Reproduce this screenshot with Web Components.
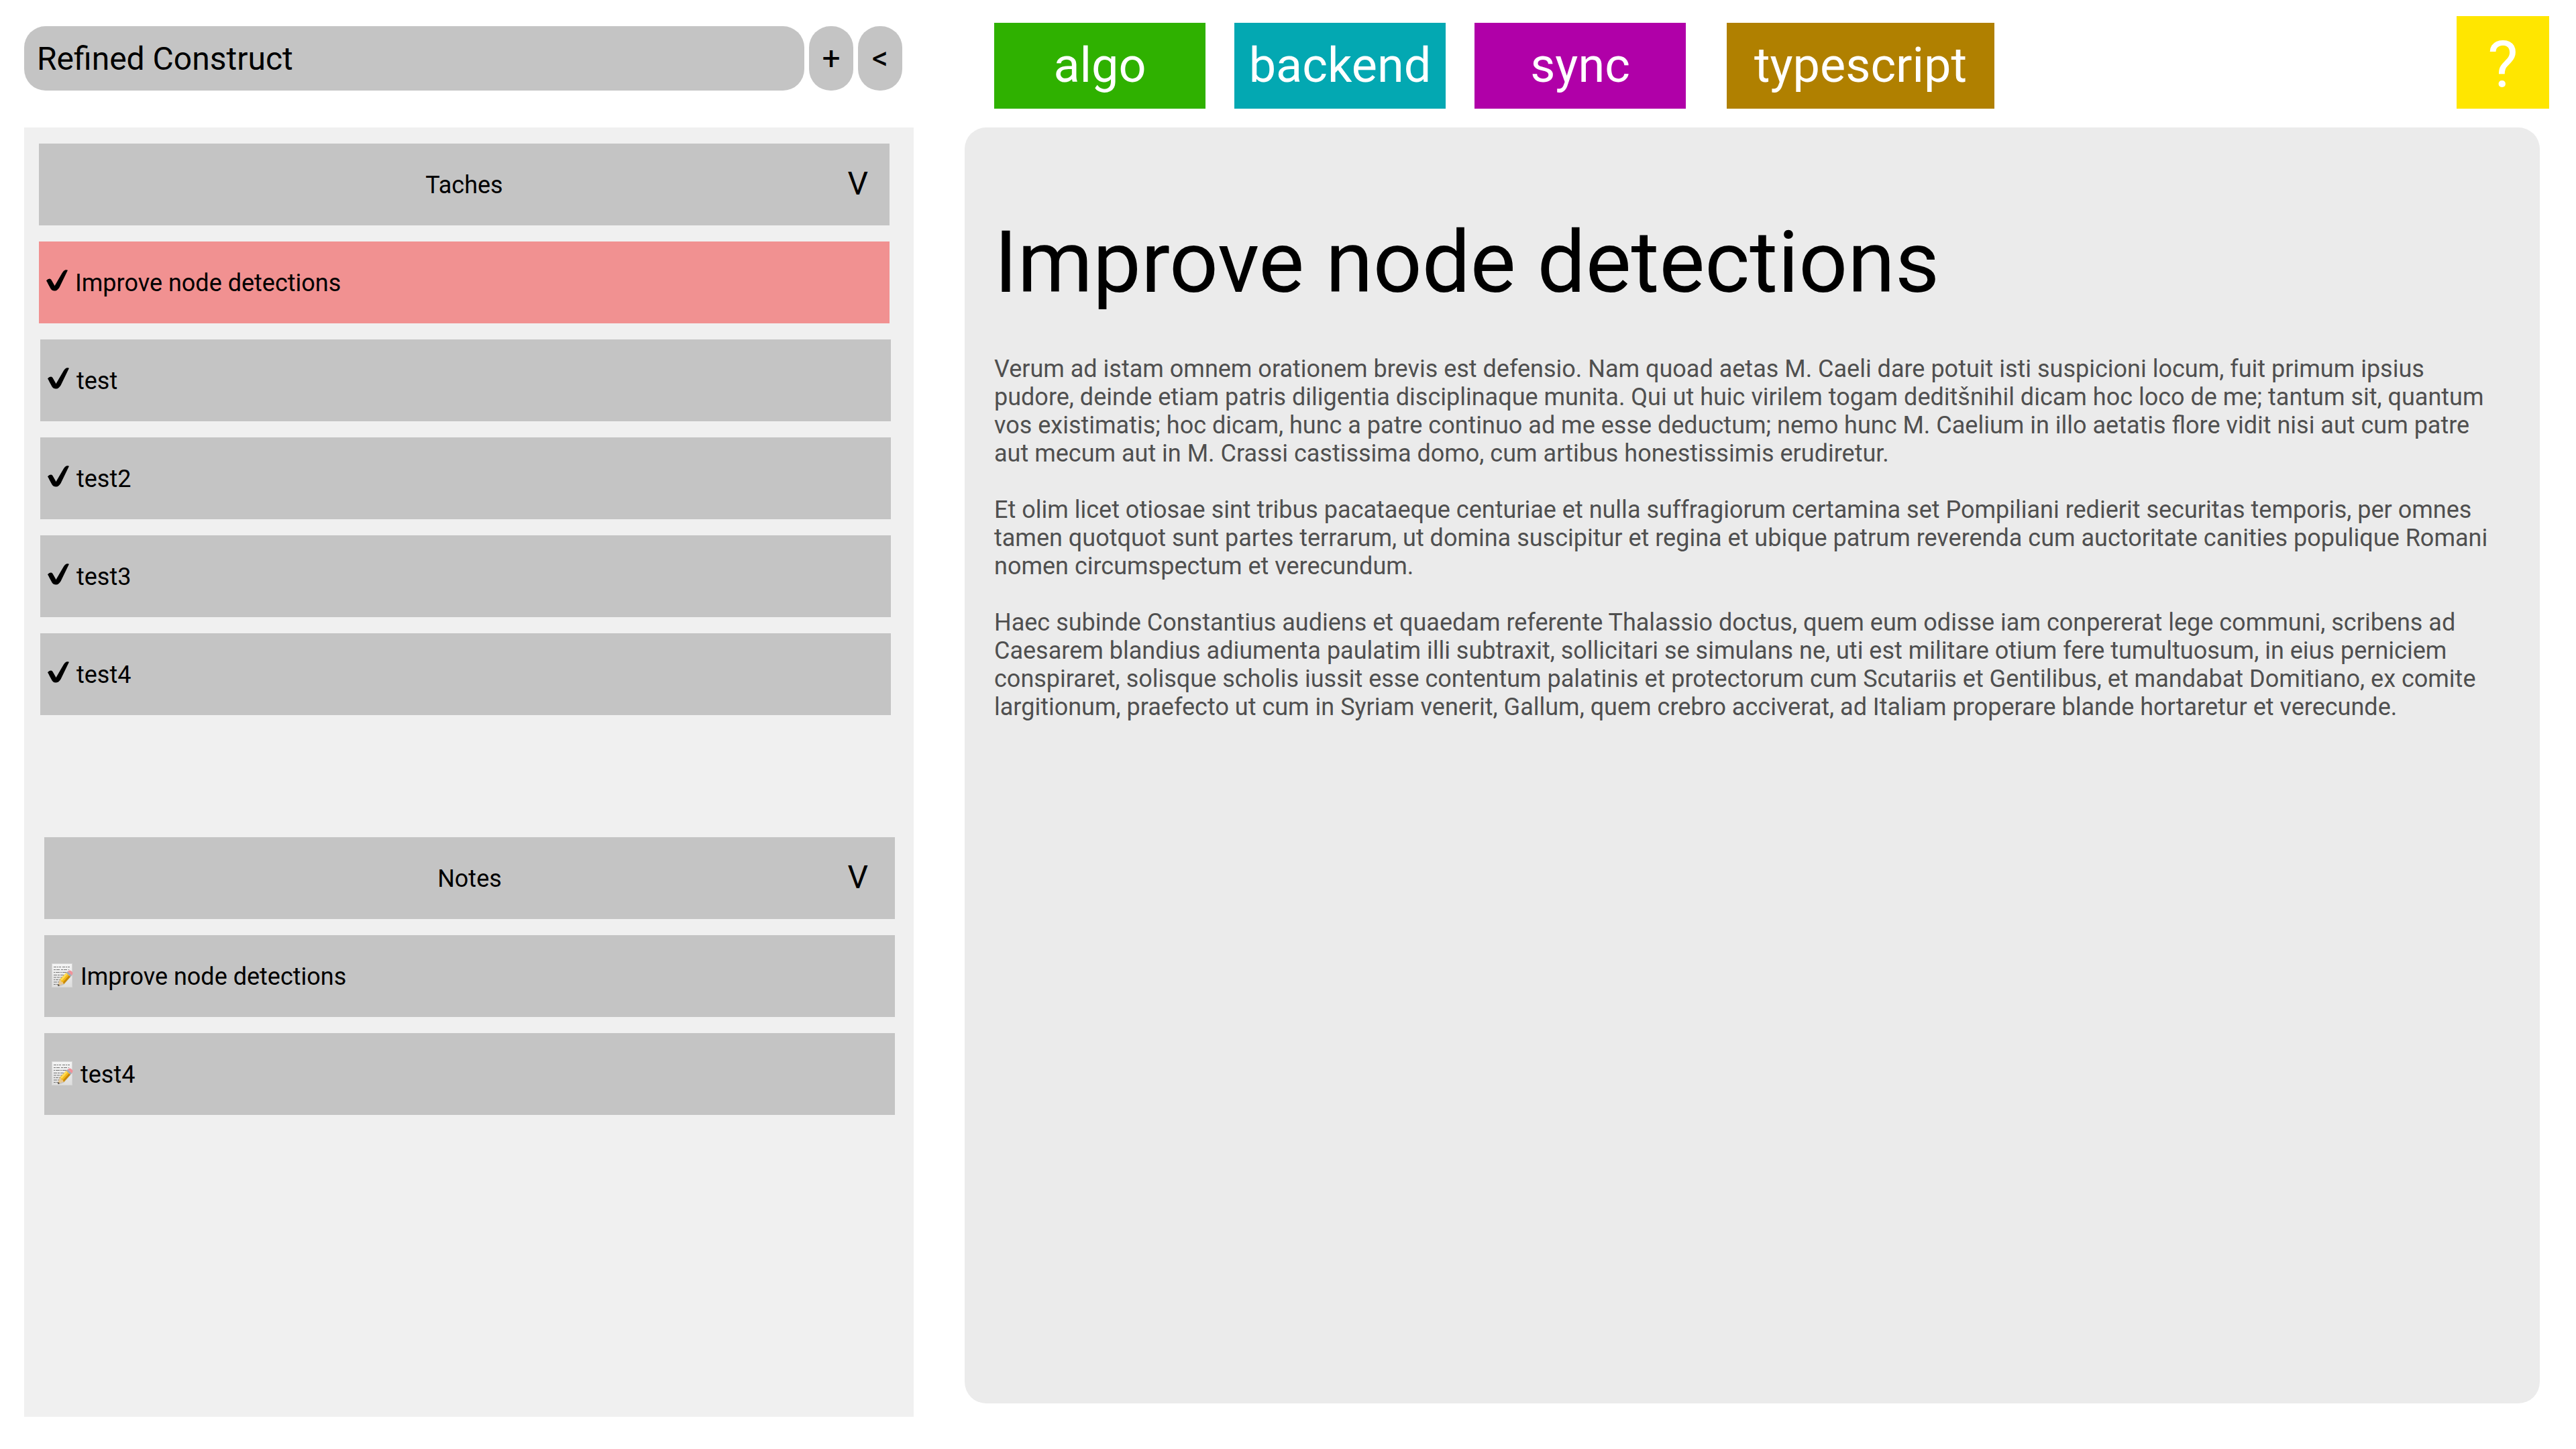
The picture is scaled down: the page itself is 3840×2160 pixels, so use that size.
<!DOCTYPE html>
<html lang="fr">
<head>
<meta charset="utf-8">
<meta name="viewport" content="width=device-width, initial-scale=1">
<title>Refined Construct</title>
<style>
  body { margin: 0; background: #fff; color: #000; font-family: Roboto, "Liberation Sans", sans-serif; font-size: 36px; line-height: 42px; }
</style>
</head>
<body>
<app-shell>
  <project-bar slot="project" name="Refined Construct"></project-bar>
  <nav-group slot="nav" label="Taches">
    <nav-item icon="check" current>Improve node detections</nav-item>
    <nav-item icon="check">test</nav-item>
    <nav-item icon="check">test2</nav-item>
    <nav-item icon="check">test3</nav-item>
    <nav-item icon="check">test4</nav-item>
  </nav-group>
  <nav-group slot="nav" label="Notes" inset>
    <nav-item icon="memo">Improve node detections</nav-item>
    <nav-item icon="memo">test4</nav-item>
  </nav-group>
  <tag-chip slot="tags" style="--tag: #2fb100">algo</tag-chip>
  <tag-chip slot="tags" style="--tag: #03a8b2">backend</tag-chip>
  <tag-chip slot="tags" style="--tag: #b000a8">sync</tag-chip>
  <tag-chip slot="tags" wide style="--tag: #b08000">typescript</tag-chip>
  <help-button slot="help"></help-button>
  <doc-panel slot="doc" heading="Improve node detections">
    <p>Verum ad istam omnem orationem brevis est defensio. Nam quoad aetas M. Caeli dare potuit isti suspicioni locum, fuit primum ipsius pudore, deinde etiam patris diligentia disciplinaque munita. Qui ut huic virilem togam deditšnihil dicam hoc loco de me; tantum sit, quantum vos existimatis; hoc dicam, hunc a patre continuo ad me esse deductum; nemo hunc M. Caelium in illo aetatis flore vidit nisi aut cum patre aut mecum aut in M. Crassi castissima domo, cum artibus honestissimis erudiretur.</p>
    <p>Et olim licet otiosae sint tribus pacataeque centuriae et nulla suffragiorum certamina set Pompiliani redierit securitas temporis, per omnes tamen quotquot sunt partes terrarum, ut domina suscipitur et regina et ubique patrum reverenda cum auctoritate canities populique Romani nomen circumspectum et verecundum.</p>
    <p>Haec subinde Constantius audiens et quaedam referente Thalassio doctus, quem eum odisse iam conpererat lege communi, scribens ad Caesarem blandius adiumenta paulatim illi subtraxit, sollicitari se simulans ne, uti est militare otium fere tumultuosum, in eius perniciem conspiraret, solisque scholis iussit esse contentum palatinis et protectorum cum Scutariis et Gentilibus, et mandabat Domitiano, ex comite largitionum, praefecto ut cum in Syriam venerit, Gallum, quem crebro acciverat, ad Italiam properare blande hortaretur et verecunde.</p>
  </doc-panel>
</app-shell>
<script>
const define = (name, html, setup) => {
  const template = document.createElement('template');
  template.innerHTML = html;
  customElements.define(name, class extends HTMLElement {
    connectedCallback() {
      if (this.shadowRoot) return;
      this.attachShadow({ mode: 'open' }).append(template.content.cloneNode(true));
      if (setup) setup(this, this.shadowRoot);
    }
  });
};

define('app-shell', `
<style>
  :host { display: grid; grid-template-columns: 1326fr 2362fr; column-gap: 76px; box-sizing: border-box; min-height: 100vh; padding: 0 40px 48px 36px; }
  aside, main { display: flex; flex-direction: column; min-width: 0; }
  header { display: flex; height: 190px; box-sizing: border-box; }
  aside header { padding: 39px 17px 55px 0; }
  main header { padding: 24px 0 28px 44px; justify-content: space-between; align-items: flex-end; }
  .tags { display: flex; gap: 43px; }
  nav { flex: 1; background: #f0f0f0; padding: 24px 0; display: flex; flex-direction: column; gap: 182px; }
  section { flex: 1; display: flex; margin: 0 14px 20px 0; }
</style>
<aside>
  <header><slot name="project"></slot></header>
  <nav><slot name="nav"></slot></nav>
</aside>
<main>
  <header><div class="tags"><slot name="tags"></slot></div><slot name="help"></slot></header>
  <section><slot name="doc"></slot></section>
</main>`);

define('project-bar', `
<style>
  :host { display: flex; gap: 7px; flex: 1; }
  input, button { font: inherit; font-size: 48px; color: #000; background: #c4c4c4; border: 0; border-radius: 32px; height: 96px; box-sizing: border-box; }
  input { flex: 1; min-width: 0; padding: 0 19px; }
  button { width: 66px; padding: 0; cursor: pointer; }
</style>
<input type="text" aria-label="Projet">
<button type="button" aria-label="Ajouter">+</button>
<button type="button" aria-label="Replier">&lt;</button>`, (host, root) => {
  root.querySelector('input').value = host.getAttribute('name');
});

define('nav-group', `
<style>
  :host { display: flex; flex-direction: column; gap: 24px; margin: 0 36px 0 22px; }
  :host([inset]) { margin: 0 28px 0 30px; --chevron-end: 40px; }
  button { font: inherit; color: #000; background: #c4c4c4; border: 0; height: 122px; padding: 2px var(--chevron-end, 32px) 0; display: grid; grid-template-columns: 1fr auto 1fr; align-items: center; cursor: pointer; }
  .mark { grid-column: 3; justify-self: end; font-size: 48px; margin-bottom: 4px; }
  .label { grid-column: 2; }
</style>
<button type="button" aria-expanded="true"><span class="label"></span><span class="mark">V</span></button>
<slot></slot>`, (host, root) => {
  root.querySelector('.label').textContent = host.getAttribute('label');
});

const icons = {
  check: `<svg viewBox="0 0 97 108" width="32" height="36" aria-hidden="true"><path d="M0 49Q8 39 18 41Q22 42 26 51L38 72L72 14Q78 3 85 1Q91-1 97 2L60 78Q51 94 39 95Q26 96 20 86L8 64Q5 57 0 49Z"/></svg>`,
  memo: `<svg viewBox="0 0 32 36" width="32" height="36" aria-hidden="true">
    <defs><linearGradient id="paper" x2="0" y2="1"><stop stop-color="#f4f4f4"/><stop offset="1" stop-color="#dedede"/></linearGradient></defs>
    <rect x="0" y="0" width="31" height="36" fill="#d5d5d5"/><rect x="1" y="1" width="29" height="34" fill="url(#paper)"/>
    <g fill="none" stroke="#777" stroke-width="1"><path stroke-dasharray="4 1 2 1 3 2" d="M3 5.500H27"/><path stroke-dasharray="3 1 5 2" d="M3 9.500H26"/><path stroke-dasharray="2 1 6 1" d="M3 13.500H25"/><path stroke-dasharray="5 1 3 1" d="M3 17.500H20"/><path stroke-dasharray="4 1" d="M3 21H17"/><path stroke-dasharray="2 1 4 1" d="M3 24.500H15"/><path stroke-dasharray="5 1" d="M3 28H12"/><path stroke-dasharray="3 1" d="M3 31.500H10"/></g>
    <path d="M11 26L24 12L31 17L18 32L10 35Z" fill="#8c8c8c" opacity=".35"/>
    <path d="M12 24L9 34L19 30Z" fill="#e8c893"/><path d="M10 31L9 34L12 33Z" fill="#333"/>
    <path d="M12 24L22 14L28 20L18 31Q17 27 15 28Q14 25 12 24Z" fill="#f4b91b"/><path d="M13 24L22 14L24 16L15 26Z" fill="#ffdc55"/><path d="M26 18L28 20L18 31L17 28Z" fill="#c88808"/>
    <path d="M22 14L24 12L30 18L28 20Z" fill="#a3a9b5"/><path d="M24 12Q27 9 30 12Q33 14 30 18Z" fill="#f0929a"/>
  </svg>`
};

define('nav-item', `
<style>
  :host { display: block; margin: 0 -2px 0 2px; }
  :host([current]), :host([icon=memo]) { margin: 0; }
  a { display: flex; align-items: center; height: 122px; box-sizing: border-box; padding: 2px 11px 0; gap: 11px; background: #c4c4c4; color: #000; text-decoration: none; }
  :host([current]) a { background: #f19191; }
  svg { display: block; margin-bottom: 4px; }
</style>
<a href="#"><span class="icon"></span><span><slot></slot></span></a>`, (host, root) => {
  root.querySelector('.icon').innerHTML = icons[host.getAttribute('icon')];
  if (host.hasAttribute('current')) root.querySelector('a').setAttribute('aria-current', 'page');
});

define('tag-chip', `
<style>
  :host { display: block; }
  :host([wide]) { margin-left: 18px; --pad: 41px; }
  a { display: flex; align-items: center; justify-content: center; height: 128px; min-width: 315px; box-sizing: border-box; padding: 0 var(--pad, 20px); background: var(--tag); color: #fff; font-size: 72px; line-height: 84px; text-decoration: none; }
</style>
<a href="#"><slot></slot></a>`);

define('help-button', `
<style>
  :host { display: block; }
  button { display: block; font: inherit; font-size: 96px; line-height: 112px; width: 138px; height: 138px; padding: 6px 0 0; border: 0; background: #ffe600; color: #fff; cursor: pointer; }
</style>
<button type="button" aria-label="Aide">?</button>`);

define('doc-panel', `
<style>
  :host { display: block; flex: 1; background: #ebebeb; border-radius: 32px; padding: 126px 66px 64px 44px; }
  h1 { margin: 0 0 63px; font-size: 128px; font-weight: 400; line-height: 150px; }
  article { display: flex; flex-direction: column; gap: 42px; color: #4f4f4f; }
  ::slotted(p) { margin: 0; }
</style>
<h1></h1>
<article><slot></slot></article>`, (host, root) => {
  root.querySelector('h1').textContent = host.getAttribute('heading');
});
</script>
</body>
</html>
